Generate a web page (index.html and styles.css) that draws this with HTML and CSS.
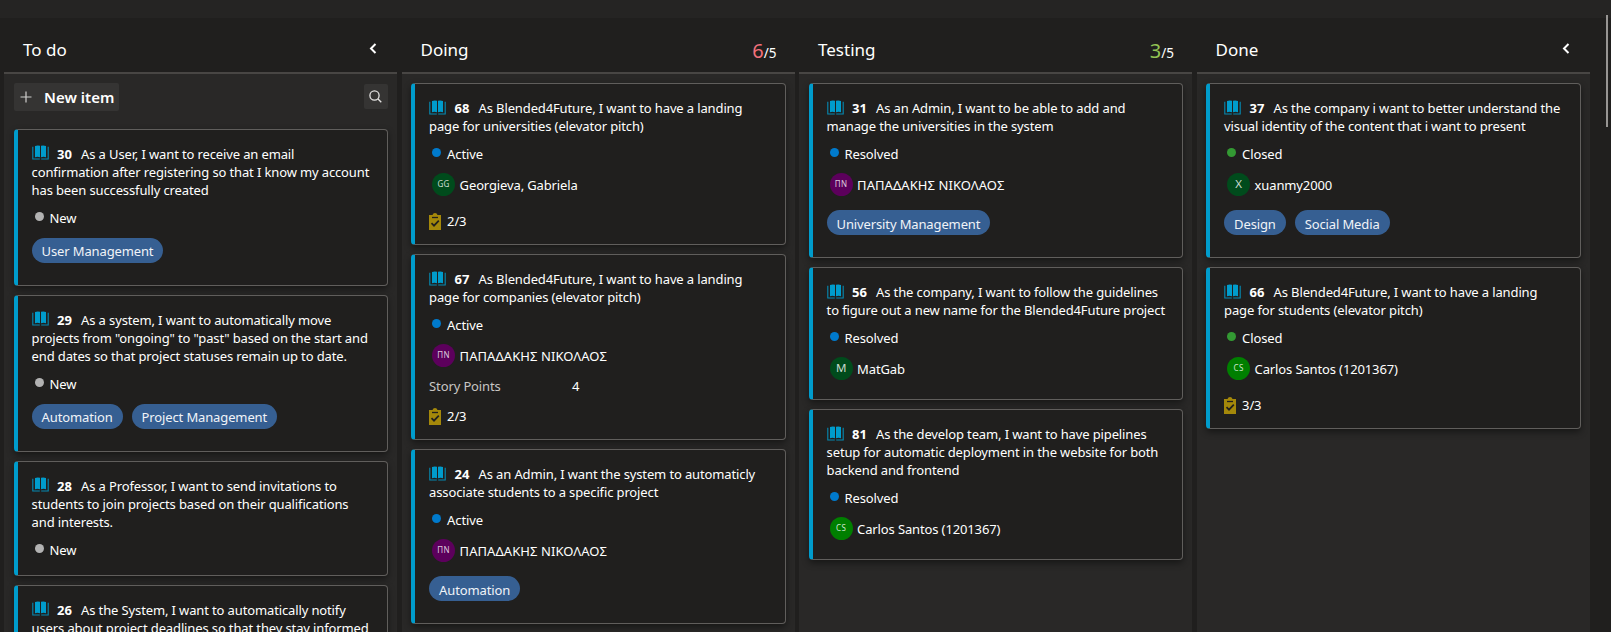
FILE: index.html
```html
<!DOCTYPE html>
<html lang="en">
<head>
<meta charset="utf-8">
<title>Board</title>
<link rel="stylesheet" href="styles.css">
</head>
<body>
<svg class="defs" aria-hidden="true">
  <symbol id="book" viewBox="0 0 17 15"><path d="M3 1Q5.500 0 8 .800V12.300Q5.500 11.500 3 12.200ZM9 .800Q11.500 0 14 1V12.200Q11.500 11.500 9 12.300Z" fill="#009ccc"/><path d="M.8 1.800V14H7.800M16.200 1.800V14H9.200" fill="none" stroke="#009ccc" stroke-width="1.100" stroke-opacity=".85"/></symbol>
  <symbol id="task" viewBox="0 0 12 17"><path d="M0 2H3.500Q4 0 6 0T8.500 2H12V17H0Z" fill="#a4880a"/><path d="M3 4.500H9" stroke="#201f1e" stroke-width="1.300"/><path d="M2.500 10.200L5 12.700L9.800 7.700" fill="none" stroke="#201f1e" stroke-width="1.700"/></symbol>
  <symbol id="chev" viewBox="0 0 8 11"><path d="M6.500 1L2 5.500L6.500 10" fill="none" stroke="#fff" stroke-width="2"/></symbol>
</svg>
<div class="topbar"></div>
<main class="board">
  <section class="column">
    <header><h2>To do</h2><svg class="chev"><use href="#chev"/></svg></header>
    <div class="body">
      <div class="tools">
        <button class="new"><svg viewBox="0 0 12 12"><path d="M6 .5V11.500M.5 6H11.500" stroke="#d0cfce" stroke-width="1.200"/></svg>New item</button>
        <button class="search"><svg viewBox="0 0 13 13"><circle cx="5.500" cy="5.500" r="4.600"/><path d="M9 9L12.300 12.300"/></svg></button>
      </div>
      <article class="card">
        <h3><span><svg class="book"><use href="#book"/></svg><b>30</b>As a User, I want to receive an email</span><span>confirmation after registering so that I know my account</span><span>has been successfully created</span></h3>
        <p class="state new-state">New</p>
        <div class="tags"><span>User Management</span></div>
      </article>
      <article class="card">
        <h3><span><svg class="book"><use href="#book"/></svg><b>29</b>As a system, I want to automatically move</span><span>projects from "ongoing" to "past" based on the start and</span><span>end dates so that project statuses remain up to date.</span></h3>
        <p class="state new-state">New</p>
        <div class="tags"><span>Automation</span><span>Project Management</span></div>
      </article>
      <article class="card">
        <h3><span><svg class="book"><use href="#book"/></svg><b>28</b>As a Professor, I want to send invitations to</span><span>students to join projects based on their qualifications</span><span>and interests.</span></h3>
        <p class="state new-state">New</p>
      </article>
      <article class="card">
        <h3><span><svg class="book"><use href="#book"/></svg><b>26</b>As the System, I want to automatically notify</span><span>users about project deadlines so that they stay informed</span></h3>
      </article>
    </div>
  </section>
  <section class="column">
    <header><h2>Doing</h2><div class="wip over"><b>6</b>/5</div></header>
    <div class="body">
      <article class="card">
        <h3><span><svg class="book"><use href="#book"/></svg><b>68</b>As Blended4Future, I want to have a landing</span><span>page for universities (elevator pitch)</span></h3>
        <p class="state active">Active</p>
        <div class="person"><i class="dark">GG</i>Georgieva, Gabriela</div>
        <div class="tasks"><svg><use href="#task"/></svg>2/3</div>
      </article>
      <article class="card">
        <h3><span><svg class="book"><use href="#book"/></svg><b>67</b>As Blended4Future, I want to have a landing</span><span>page for companies (elevator pitch)</span></h3>
        <p class="state active">Active</p>
        <div class="person"><i class="purple">ΠΝ</i><span class="greek">ΠΑΠΑΔΑΚΗΣ ΝΙΚΟΛΑΟΣ</span></div>
        <div class="field"><span>Story Points</span>4</div>
        <div class="tasks"><svg><use href="#task"/></svg>2/3</div>
      </article>
      <article class="card">
        <h3><span><svg class="book"><use href="#book"/></svg><b>24</b>As an Admin, I want the system to automaticly</span><span>associate students to a specific project</span></h3>
        <p class="state active">Active</p>
        <div class="person"><i class="purple">ΠΝ</i><span class="greek">ΠΑΠΑΔΑΚΗΣ ΝΙΚΟΛΑΟΣ</span></div>
        <div class="tags"><span>Automation</span></div>
      </article>
    </div>
  </section>
  <section class="column">
    <header><h2>Testing</h2><div class="wip"><b>3</b>/5</div></header>
    <div class="body">
      <article class="card">
        <h3><span><svg class="book"><use href="#book"/></svg><b>31</b>As an Admin, I want to be able to add and</span><span>manage the universities in the system</span></h3>
        <p class="state active">Resolved</p>
        <div class="person"><i class="purple">ΠΝ</i><span class="greek">ΠΑΠΑΔΑΚΗΣ ΝΙΚΟΛΑΟΣ</span></div>
        <div class="tags"><span>University Management</span></div>
      </article>
      <article class="card">
        <h3><span><svg class="book"><use href="#book"/></svg><b>56</b>As the company, I want to follow the guidelines</span><span>to figure out a new name for the Blended4Future project</span></h3>
        <p class="state active">Resolved</p>
        <div class="person"><i class="dark single">M</i>MatGab</div>
      </article>
      <article class="card">
        <h3><span><svg class="book"><use href="#book"/></svg><b>81</b>As the develop team, I want to have pipelines</span><span>setup for automatic deployment in the website for both</span><span>backend and frontend</span></h3>
        <p class="state active">Resolved</p>
        <div class="person"><i class="green">CS</i>Carlos Santos (1201367)</div>
      </article>
    </div>
  </section>
  <section class="column">
    <header><h2>Done</h2><svg class="chev"><use href="#chev"/></svg></header>
    <div class="body">
      <article class="card">
        <h3><span><svg class="book"><use href="#book"/></svg><b>37</b>As the company i want to better understand the</span><span>visual identity of the content that i want to present</span></h3>
        <p class="state closed">Closed</p>
        <div class="person"><i class="dark single">X</i>xuanmy2000</div>
        <div class="tags"><span>Design</span><span>Social Media</span></div>
      </article>
      <article class="card">
        <h3><span><svg class="book"><use href="#book"/></svg><b>66</b>As Blended4Future, I want to have a landing</span><span>page for students (elevator pitch)</span></h3>
        <p class="state closed">Closed</p>
        <div class="person"><i class="green">CS</i>Carlos Santos (1201367)</div>
        <div class="tasks"><svg><use href="#task"/></svg>3/3</div>
      </article>
    </div>
  </section>
</main>
<div class="scrollbar"></div>
</body>
</html>
```
FILE: styles.css
```css
* { box-sizing: border-box; }
html, body { height: 100%; overflow: hidden; }
body { margin: 0; background: #201f1e; color: #fff; font: 13px/18px "Noto Sans", "Open Sans", sans-serif; display: flex; flex-direction: column; }
h2, h3, p { margin: 0; font-weight: 400; }
svg { display: block; flex: none; }
.defs { position: absolute; width: 0; height: 0; }
.topbar { height: 18px; flex: none; background: #252423; }
.board { flex: none; height: 614px; padding-left: 4px; display: grid; grid-template-columns: repeat(4, 393px); column-gap: 4.500px; overflow: hidden; }
.column { display: flex; flex-direction: column; min-height: 0; }
.column header { height: 56px; flex: none; border-bottom: 2px solid #484644; display: flex; align-items: center; justify-content: space-between; padding: 10px 18px 0 19px; }
.column h2 { font-size: 17px; line-height: 24px; }
.chev { width: 8px; height: 11px; margin: -3px 2px 0 0; }
.wip { display: flex; align-items: baseline; font-size: 13.500px; line-height: 24px; padding-top: 4px; }
.wip b { font-size: 20px; font-weight: 400; color: #92c353; }
.wip.over b { color: #f1707b; }
.body { flex: 1; background: #292827; padding: 9px 9px 0 9.600px; display: flex; flex-direction: column; gap: 9px; letter-spacing: -.13px; }
.tools { display: flex; justify-content: space-between; height: 36.600px; flex: none; }
button { border: 0; margin: 0; padding: 0; background: #353433; color: #fff; border-radius: 2px; display: flex; align-items: center; font-family: inherit; }
.new { width: 105px; height: 28px; font-size: 15px; font-weight: 600; padding-left: 6px; gap: 12.500px; white-space: nowrap; }
.new svg { width: 12px; height: 12px; }
.search { width: 24px; height: 25px; margin-top: 1px; padding-right: 1px; justify-content: center; }
.search svg { width: 13px; height: 13px; fill: none; stroke: #e3e2e1; stroke-width: 1.300; }
.card { flex: none; background: #201f1e; border: 1px solid #605e5c; border-left: 4px solid #009ccc; border-radius: 4px; padding: 15px 12px 16px 14px; box-shadow: 0 3px 7px rgba(0, 0, 0, .45); }
.card h3 { font-size: 13px; }
.card h3 > span { display: flex; align-items: center; height: 18px; white-space: nowrap; }
.book { width: 17px; height: 15px; margin-right: 8.500px; margin-top: -2px; }
.card h3 b { font-weight: 700; width: 24px; letter-spacing: 0; }
.state { height: 20px; margin-top: 8px; padding: 2px 0 0 3px; display: flex; align-items: center; gap: 6px; }
.state::before { content: ""; width: 9px; height: 9px; border-radius: 50%; margin-top: -3px; background: #b2b2b2; }
.state.active::before { background: #007acc; }
.state.closed::before { background: #393; }
.person { height: 30px; margin-top: 6px; padding: 2px 0 0 3px; display: flex; align-items: center; gap: 4.500px; }
.person i { width: 23px; height: 23px; margin-top: -2px; border-radius: 50%; display: grid; place-items: center; font-size: 8px; line-height: 10px; letter-spacing: .3px; font-style: normal; color: rgba(255, 255, 255, .8); }
.person i.single { font-size: 11.500px; letter-spacing: 0; }
.greek { letter-spacing: .07px; }
.dark { background: #004b1c; }
.purple { background: #5c005c; }
.green { background: #007f00; }
.tags { display: flex; gap: 9px; margin: 11px 0 6px; }
.tags span { height: 25px; border-radius: 13px; padding: 2px 10px 0; display: flex; align-items: center; background: #365f92; color: #f0f3f8; }
.field { height: 24px; padding-top: 7px; display: flex; }
.field span { width: 143px; color: #c8c6c4; }
.tasks { height: 18px; margin-top: 11px; padding-top: 4px; display: flex; align-items: center; gap: 6px; }
.tasks svg { width: 12px; height: 17px; }
.scrollbar { position: absolute; left: 1606px; top: 15px; width: 2px; height: 112px; background: #979593; }
```
